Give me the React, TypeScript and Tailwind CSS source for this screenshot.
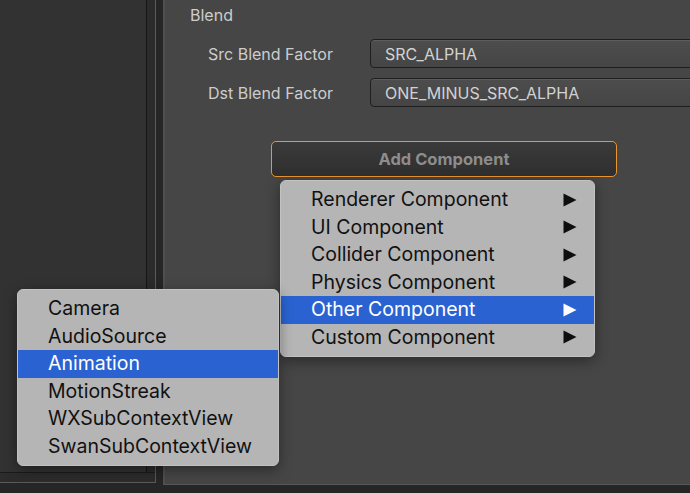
import * as React from "react";

const font = { fontFamily: "Inter, 'Noto Sans', sans-serif" };

const mainItems = [
  "Renderer Component",
  "UI Component",
  "Collider Component",
  "Physics Component",
  "Other Component",
  "Custom Component",
];

const otherItems = [
  "Camera",
  "AudioSource",
  "Animation",
  "MotionStreak",
  "WXSubContextView",
  "SwanSubContextView",
];

function Arrow({ active }: { active: boolean }) {
  return (
    <svg width="14" height="14" viewBox="0 0 14 14" className="shrink-0">
      <polygon points="0.5,0.5 13.5,7 0.5,13.5" fill={active ? "#ffffff" : "#0e0e0e"} />
    </svg>
  );
}

function SelectBox({ value }: { value: string }) {
  return (
    <div className="flex h-[29px] w-[340px] shrink-0 items-center rounded-[4px] border border-[#1e1e1e] bg-gradient-to-b from-[#4d4d4d] to-[#454545] pl-[14px] text-[16px] text-[#d2d2d2] shadow-[inset_0_1px_0_#5c5c5c]">
      {value}
    </div>
  );
}

function Row({ label, value }: { label: string; value: string }) {
  return (
    <div className="flex items-center">
      <div className="w-[162px] shrink-0 text-[16px] text-[#cdcdcd]">{label}</div>
      <SelectBox value={value} />
    </div>
  );
}

export default function App() {
  return (
    <div
      className="relative flex h-[493px] w-[690px] overflow-hidden bg-[#262626]"
      style={font}
    >
      {/* left panel */}
      <div className="flex h-[483px] w-[156px] shrink-0 flex-col border-r border-b border-[#5a5a5a] bg-[#323232]">
        <div className="flex flex-1">
          <div className="flex-1" />
          <div className="w-[9px] border-l border-[#161616] bg-[#2b2b2b]" />
        </div>
        <div className="h-[10px] border-t border-[#1b1b1b] bg-[#2c2c2c]" />
      </div>

      <div className="w-[7px] shrink-0" />

      {/* inspector panel */}
      <div className="flex h-[485px] min-w-0 flex-1 flex-col overflow-hidden border-l-2 border-b border-l-[#4f4f4f] border-b-[#585858] bg-[#464646]">
        <div className="pl-[25px] pt-[5px] text-[16px] leading-[20px] text-[#cdcdcd]">
          Blend
        </div>
        <div className="mt-[14px] flex flex-col gap-[10px] pl-[43px]">
          <Row label="Src Blend Factor" value="SRC_ALPHA" />
          <Row label="Dst Blend Factor" value="ONE_MINUS_SRC_ALPHA" />
        </div>
        <div className="mt-[34px] pl-[106px]">
          <div className="flex h-[36px] w-[346px] items-center justify-center rounded-[5px] border-[1.5px] border-[#ec952d] bg-gradient-to-b from-[#3a3a3a] to-[#2f2f2f] text-[16.5px] font-bold text-[#8d8d8d]">
            Add Component
          </div>
        </div>
      </div>

      {/* add component menu */}
      <div className="absolute left-[280px] top-[180px] w-[315px] rounded-[6px] border border-[#c2c2c2] bg-[#b5b5b5] py-[5px] shadow-[0_4px_14px_rgba(0,0,0,0.4)]">
        {mainItems.map((item) => {
          const active = item === "Other Component";
          return (
            <div
              key={item}
              className={
                active
                  ? "flex h-[27.5px] items-center justify-between bg-[#2a63d1] pl-[30px] pr-[17px] text-[19.5px] text-white"
                  : "flex h-[27.5px] items-center justify-between pl-[30px] pr-[17px] text-[19.5px] text-[#111111]"
              }
            >
              <span>{item}</span>
              <Arrow active={active} />
            </div>
          );
        })}
      </div>

      {/* other component submenu */}
      <div className="absolute left-[17px] top-[289px] w-[262px] rounded-[6px] border border-[#c2c2c2] bg-[#b5b5b5] py-[5px] shadow-[0_4px_14px_rgba(0,0,0,0.4)]">
        {otherItems.map((item) => {
          const active = item === "Animation";
          return (
            <div
              key={item}
              className={
                active
                  ? "flex h-[27.5px] items-center bg-[#2a63d1] pl-[30px] text-[19.5px] text-white"
                  : "flex h-[27.5px] items-center pl-[30px] text-[19.5px] text-[#111111]"
              }
            >
              {item}
            </div>
          );
        })}
      </div>
    </div>
  );
}
